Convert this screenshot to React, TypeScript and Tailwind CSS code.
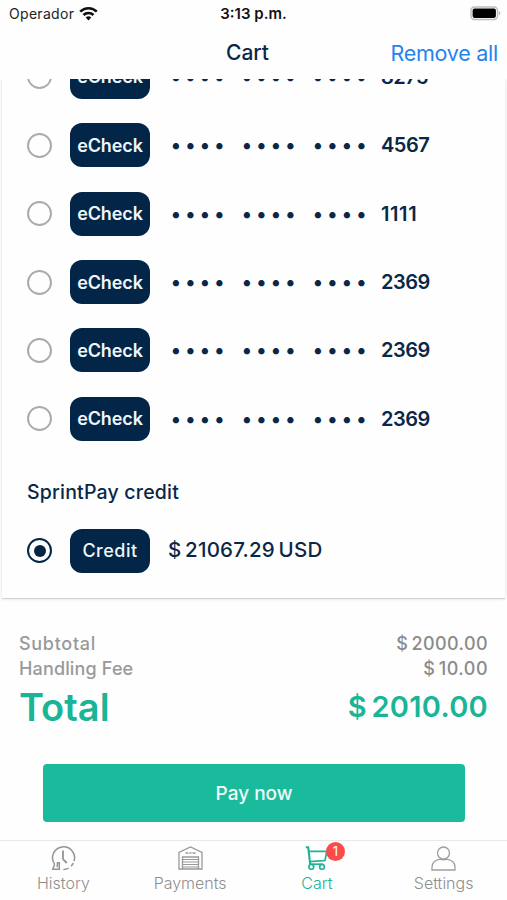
import type { ReactNode } from "react";

const CARDS = ["8275", "4567", "1111", "2369", "2369", "2369"];

function Radio({ checked = false }: { checked?: boolean }) {
  return (
    <span
      className={`flex size-[25px] shrink-0 items-center justify-center rounded-full border-2 ${
        checked ? "border-[#032447]" : "border-[#ababab]"
      }`}
    >
      {checked && <span className="size-[12px] rounded-full bg-[#032447]" />}
    </span>
  );
}

function Badge({ children, className = "" }: { children: ReactNode; className?: string }) {
  return (
    <span
      className={`ml-[18px] flex h-11 w-20 shrink-0 items-center justify-center rounded-[12px] bg-[#022548] text-[18px] text-[#eef6fa] ${className}`}
    >
      {children}
    </span>
  );
}

function Dots() {
  return (
    <span className="flex">
      {[0, 1, 2, 3].map((i) => (
        <span key={i} className="w-[14.5px] text-center text-[20px] leading-none">
          •
        </span>
      ))}
    </span>
  );
}

function CardRow({ last4 }: { last4: string }) {
  return (
    <div className="flex h-[68.4px] shrink-0 items-center">
      <Radio />
      <Badge className="font-semibold tracking-[-0.1px]">eCheck</Badge>
      <div className="ml-[18.5px] flex gap-[13px]">
        <Dots />
        <Dots />
        <Dots />
      </div>
      <span
        className={`ml-[12.5px] text-[20px] font-semibold ${
          last4 === "1111" ? "tracking-[0.6px]" : "tracking-[-0.5px]"
        }`}
      >
        {last4}
      </span>
    </div>
  );
}

function StatusBar() {
  return (
    <div className="grid h-[27px] grid-cols-3 items-center pr-[6px] pl-[9px] text-[14px] text-[#222]">
      <div className="flex items-center gap-[5px]">
        <span className="tracking-[0.3px]">Operador</span>
        <svg width="19" height="15" viewBox="0 0 19 15" fill="none" stroke="#111" strokeWidth="2.6">
          <path d="M1.2 5.6a11.8 11.8 0 0 1 16.6 0" />
          <path d="M4.5 9a7.1 7.1 0 0 1 10 0" />
          <path d="M9.5 14.4 6.7 11.5a4 4 0 0 1 5.6 0z" fill="#111" stroke="none" />
        </svg>
      </div>
      <span className="-ml-[3px] pt-[2px] text-center text-[15px] font-semibold text-[#111]">3:13 p.m.</span>
      <div className="flex justify-end">
        <svg width="31" height="15" viewBox="0 0 31 15">
          <rect x="1" y="1" width="26.5" height="12.5" rx="3.5" fill="#fff" stroke="#bcbcbc" strokeWidth="1.4" />
          <rect x="2.6" y="2.6" width="23.3" height="9.3" rx="1.8" fill="#000" />
          <path d="M28.8 5c2 .8 2 3.7 0 4.5z" fill="#b5b5b5" />
        </svg>
      </div>
    </div>
  );
}

function HistoryIcon() {
  return (
    <svg width="25" height="25" viewBox="0 0 25 25" fill="none" stroke="#949494" strokeWidth="1.5">
      <path d="M3.6 18.2A11 11 0 1 1 23 15.3" />
      <path d="M22.3 17.2a11 11 0 0 1-2.3 3M17.6 22.2a11 11 0 0 1-5.2 1.3" />
      <path d="M3.6 18.2 1.8 23.3h6.5v-6.6H6.5l-.3 4.6" />
      <path d="M12 4.5v8.7l3.8 3.8" strokeWidth="1.8" />
    </svg>
  );
}

function GarageIcon() {
  return (
    <svg width="25" height="24" viewBox="0 0 25 24" fill="none" stroke="#999" strokeWidth="1.3">
      <path d="M1 23V6.3L12.5 1 24 6.3V23zM4.5 23V11h16v12" />
      <path d="M4.5 13.5h16M4.5 16h16M4.5 18.5h16M4.5 21h16" strokeWidth="1" />
      <path d="M7.5 7h3M11.5 7h2M14.5 7h3" />
    </svg>
  );
}

function CartIcon() {
  return (
    <svg width="24" height="24" viewBox="0 0 24 24" fill="none" stroke="#1db393" strokeWidth="1.7">
      <path d="M.8 1.2h2.4l2 17.2" strokeWidth="2.1" />
      <path d="M3.8 5.3h18l-1.8 9.2L4.8 15.6" />
      <path d="M5.2 18.2h13" />
      <circle cx="6.3" cy="20.9" r="2.4" />
      <circle cx="17" cy="20.9" r="2.4" />
    </svg>
  );
}

function UserIcon() {
  return (
    <svg width="25" height="25" viewBox="0 0 25 25" fill="none" stroke="#9e9e9e" strokeWidth="1.3">
      <circle cx="12.5" cy="7" r="6" />
      <path d="M1 24v-3c0-4 3.5-6.8 8-7.8q3.5 1.2 7 0c4.5 1 8 3.8 8 7.8v3z" />
    </svg>
  );
}

interface TabProps {
  label: string;
  icon: ReactNode;
  active?: boolean;
}

function Tab({ label, icon, active }: TabProps) {
  return (
    <div className="flex flex-1 flex-col items-center pt-1">
      <div className="relative flex h-[26px] items-center">
        {icon}
        {active && (
          <span className="absolute -top-[3px] left-[21px] flex size-[19px] items-center justify-center rounded-full bg-[#fb4b4b] text-[13px] text-white">
            1
          </span>
        )}
      </div>
      <span
        className={`mt-[2px] text-[16px] leading-5 font-light whitespace-nowrap ${
          active ? "text-[#1db393]" : "text-[#8f8f8f]"
        }`}
      >
        {label}
      </span>
    </div>
  );
}

export default function App() {
  return (
    <div className="flex h-[900px] w-[507px] flex-col overflow-hidden bg-[#fefefe] font-['Inter','Liberation_Sans',sans-serif] text-[#0b2748]">
      <StatusBar />
      <header className="grid h-[52px] grid-cols-3 items-center px-[9px]">
        <span />
        <h1 className="-ml-3 text-center text-[21px] font-medium">Cart</h1>
        <span className="text-right text-[21.5px] tracking-[-0.25px] whitespace-nowrap text-[#2484ee]">
          Remove all
        </span>
      </header>

      <main className="flex h-[524px] flex-col overflow-hidden px-[2px] pb-1">
        <div className="flex h-[520px] flex-col justify-end border-b border-[#d4d4d4] pl-[25px] shadow-[0_0_3px_rgba(0,0,0,0.15)]">
          {CARDS.map((last4, i) => (
            <CardRow key={i} last4={last4} />
          ))}
          <h2 className="mt-[27px] shrink-0 text-[19.5px] leading-6 font-medium tracking-[0.2px]">
            SprintPay credit
          </h2>
          <div className="mt-[24.5px] mb-[25.5px] flex h-11 shrink-0 items-center">
            <Radio checked />
            <Badge className="font-medium tracking-[0.5px]">Credit</Badge>
            <span className="ml-[18px] text-[20.5px] font-medium tracking-[0.2px] [word-spacing:-2px]">
              $ 21067.29 USD
            </span>
          </div>
        </div>
      </main>

      <section className="flex h-[237px] flex-col px-[19px] pt-[27px]">
        <div className="flex h-[25.5px] items-center justify-between pt-px text-[18px] font-medium text-[#999]">
          <span className="tracking-[0.7px]">Subtotal</span>
          <span className="tracking-[0.4px] text-[#8b8b8b] [word-spacing:-2px]">$ 2000.00</span>
        </div>
        <div className="flex h-[25.5px] items-center justify-between text-[18px] font-medium text-[#999]">
          <span className="tracking-[0.15px]">Handling Fee</span>
          <span className="tracking-[0.5px] text-[#8b8b8b] [word-spacing:-2px]">$ 10.00</span>
        </div>
        <div className="flex h-[52px] items-center justify-between font-semibold text-[#19b596]">
          <span className="text-[38px]">Total</span>
          <span className="text-[29px] tracking-[0.3px] [word-spacing:-3px]">$ 2010.00</span>
        </div>
        <button className="mr-[23px] ml-6 mt-[30.5px] h-[58px] rounded-[4px] bg-[#1abb9c] pt-[3px] text-[19px] font-medium text-[#eefaf8]">
          Pay now
        </button>
      </section>

      <nav className="flex h-[60px] border-t border-[#e8e8e8]">
        <Tab label="History" icon={<HistoryIcon />} />
        <Tab label="Payments" icon={<GarageIcon />} />
        <Tab label="Cart" icon={<CartIcon />} active />
        <Tab label="Settings" icon={<UserIcon />} />
      </nav>
    </div>
  );
}
